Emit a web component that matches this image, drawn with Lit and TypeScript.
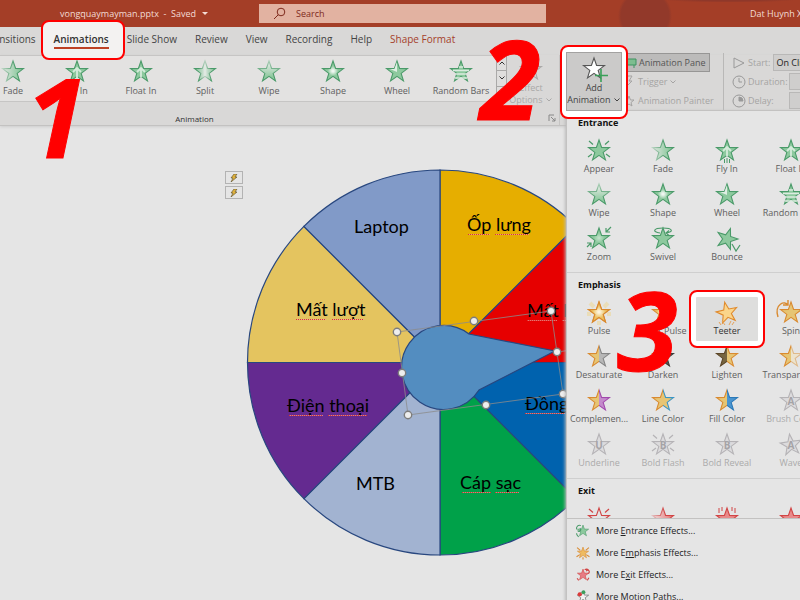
import { LitElement, html, svg, css, nothing, type TemplateResult } from "lit";
import { customElement } from "lit/decorators.js";
import { classMap } from "lit/directives/class-map.js";

type Svg = TemplateResult | TemplateResult[] | typeof nothing;

/* Points of a five-pointed star centred on the origin. */
const starPoints = (outer: number, inner: number) =>
  Array.from({ length: 10 }, (_, i) => {
    const r = i % 2 ? inner : outer;
    const a = (Math.PI / 5) * i - Math.PI / 2;
    return `${(r * Math.cos(a)).toFixed(2)},${(r * Math.sin(a)).toFixed(2)}`;
  }).join(" ");

const STAR = starPoints(11, 4.4);

const star = (fill: string, stroke: string, extra: Svg = nothing, defs: Svg = nothing, turn = 0) => html`
  <svg class="star" viewBox="-13 -12 26 24" aria-hidden="true">
    <defs>${defs}</defs>
    <polygon points=${STAR} fill=${fill} stroke=${stroke} stroke-width="1.1" transform="rotate(${turn})"></polygon>
    ${extra}
  </svg>`;

const linear = (id: string, dir: "x" | "y", stops: [number, string][]) => svg`
  <linearGradient id=${id} x1="0" y1="0" x2=${dir === "x" ? 1 : 0} y2=${dir === "y" ? 1 : 0}>
    ${stops.map(([o, c]) => svg`<stop offset=${o} stop-color=${c}></stop>`)}
  </linearGradient>`;
const radial = (id: string, stops: [number, string][]) => svg`
  <radialGradient id=${id}>
    ${stops.map(([o, c]) => svg`<stop offset=${o} stop-color=${c}></stop>`)}
  </radialGradient>`;
const line = (d: string, color: string, width = 1.2) =>
  svg`<path d=${d} fill="none" stroke=${color} stroke-width=${width}></path>`;
const letter = (t: string) => svg`<text class="glyph" x="0" y="4" text-anchor="middle">${t}</text>`;

const G = "#8dc99e";
const GS = "#4a9a69";
const O = "#e6c574";
const OS = "#d98a30";
const N = "#dcdbdd";
const NS = "#b5b3b6";
const R = "#e88a8a";
const RS = "#d14545";
const RAYS = "M-10 -10L-6 -6.5M10 -10L6 -6.5M-11 6L-7 3M11 6L7 3";

const icons: Record<string, () => TemplateResult> = {
  appear: () => star(G, GS, line(RAYS, GS)),
  fade: () => star("url(#fade)", "url(#fadeS)", nothing, [
    linear("fade", "x", [[0, "#dfe6e1"], [0.8, G]]),
    linear("fadeS", "x", [[0, "#b9d3c1"], [0.6, GS]]),
  ]),
  flyGallery: () => star(G, GS, line("M0 6V-4M-4 0L0 -4L4 0", "#d5ebdb", 1.8)),
  fly: () => star(G, GS, [line("M0 5V-4M-4 0L0 -4L4 0", "#d5ebdb", 1.8), line("M-2.5 8V12M0 7V12M2.5 8V12", GS, 1)]),
  float: () => star(G, GS, line("M0 5V-4M-4 0L0 -4L4 0", "#d5ebdb", 1.8)),
  split: () => star("url(#split)", "url(#splitS)", nothing, [
    linear("split", "x", [[0, G], [0.35, "#b9d8c2"], [0.5, "#e6ebe7"], [0.65, "#b9d8c2"], [1, G]]),
    linear("splitS", "x", [[0.2, GS], [0.5, "#b5d0be"], [0.8, GS]]),
  ]),
  wipe: () => star("url(#wipe)", "url(#wipeS)", nothing, [
    linear("wipe", "y", [[0.1, "#e6ebe7"], [0.8, G]]),
    linear("wipeS", "y", [[0, "#a9cdb5"], [0.7, GS]]),
  ]),
  shape: () => star("url(#shape)", GS, nothing, radial("shape", [[0.1, "#eef6f0"], [0.5, G]])),
  wheel: () => star(G, GS, svg`<path d="M0 0L-7 -3H-2.6L0 -10Z" fill="#dfeee3"></path>`),
  bars: () => star(G, GS, line("M-2 -5H2M-8 -1.5H8M-5 2H5M-6 6H6", "#dcebe0", 1.4)),
  zoom: () => star("url(#zoomF)", GS, line("M12 -12L7 -7M7 -11V-7H11M-12 8L-8 4M-12 4H-8V8", GS), radial("zoomF", [[0, "#c5e3cd"], [0.5, G]])),
  swivel: () => star(G, GS, line("M-3 -6C-11 -7 -10 -11 0 -11S11 -7 3 -6M6 -8.500L3 -6L6 -3.500", GS)),
  bounce: () => star(G, GS, line("M5 5L9 12L13 6", GS), nothing, 18),
  pulse: () => star("url(#pulse)", OS, nothing, radial("pulse", [[0.1, "#fbf3dc"], [0.6, "#ecc363"]])),
  pulseGlow: () => star("url(#pulseG)", OS,
    svg`<path d="M-9 -10L-5 -6M9 -10L5 -6M-12 1H-8M12 1H8M0 8V12" stroke="#ecdcae" stroke-width="4" opacity=".8"></path>
        <polygon points=${STAR} fill="url(#pulseG)" stroke=${OS} stroke-width="1.2"></polygon>`,
    radial("pulseG", [[0.1, "#fbf3dc"], [0.6, "#ecc363"]])),
  teeter: () => star("#fbd58a", "#e08a2c", line("M-5 8L-2 12M-8 9L-6 12M4 8L2 12M7 9L5 12", "#e5a25a", 1), nothing, -12),
  spin: () => star(O, OS, line("M-13 4C-17 -9 -6 -13 -3 -8M-3 -13V-8H-8", OS, 1.4)),
  desaturate: () => half("des", O, "#b7b7b7", OS, "#858585"),
  darken: () => half("dar", O, "#55534f", OS, "#3d3b38"),
  lighten: () => half("lig", "#776540", O, "#5c4628", OS),
  transparency: () => half("tra", O, "#ece3cd", OS, "#dfb98a"),
  complementary: () => half("com", O, "#c48acb", OS, "#a149ad"),
  lineColor: () => half("lin", O, O, OS, "#3b95c4"),
  fillColor: () => half("fil", O, "#4a95d0", OS, "#2b79b8"),
  brush: () => star(N, NS, letter("A")),
  underline: () => star(N, NS, letter("U")),
  boldFlash: () => star(N, NS, [letter("B"), line(RAYS, NS)]),
  boldReveal: () => star(N, NS, letter("B")),
  wave: () => star(N, NS, letter("A"), nothing, -8),
  exitDisappear: () => star("#e5e5e5", RS, line(RAYS, RS)),
  exitFade: () => star("url(#xf)", "url(#xfS)", nothing, [
    linear("xf", "x", [[0, "#eedede"], [0.8, R]]),
    linear("xfS", "x", [[0, "#e3bcbc"], [0.6, RS]]),
  ]),
  exitFly: () => star(R, RS, line("M-8 -11V-6M-5 -12V-8M5 -12V-8M8 -11V-6", RS, 1)),
  exitFloat: () => star(R, RS),
  moreEntrance: () => star(G, GS, line("M-12 -3C-13 -9 -8 -12 -4 -10M-12 4C-12 8 -9 10 -8 11M-10 -1A3 3 0 1 0 -6 -5", GS, 2)),
  moreEmphasis: () => star("#eebb62", OS, line("M-11 -10L-5 -5M11 -10L5 -5M-12 7L-6 3M12 7L6 3M0 8V12", OS, 2)),
  moreExit: () => star("#e77c84", RS, line("M3 -10C9 -13 13 -8 11 -4M6 -7A3 3 0 1 1 9 -3M-11 6L-8 10M11 5L8 10", RS, 2)),
  morePaths: () => star("#f3f3f3", "#555", svg`<path d="M-7 -5Q-4 -10 0 -10" fill="none" stroke="#555"></path>
    <circle cx="-6" cy="-5" r="4" fill="#dd3a3a"></circle><circle cx="1" cy="-9" r="3.500" fill="#3f9e5d"></circle>`),
};

/* Star whose left and right halves carry different colours. */
function half(id: string, a: string, b: string, sa: string, sb: string) {
  return star(`url(#${id})`, `url(#${id}S)`, nothing, [
    linear(id, "x", [[0.5, a], [0.5, b]]),
    linear(`${id}S`, "x", [[0.5, sa], [0.5, sb]]),
  ]);
}

interface Effect { icon: string; label: string; on?: boolean; off?: boolean }
const fx = (icon: string, label: string, state: Partial<Effect> = {}): Effect => ({ icon, label, ...state });
const OFF = { off: true };

const GALLERY = [
  fx("fade", "Fade"), fx("flyGallery", "Fly In"), fx("float", "Float In"), fx("split", "Split"),
  fx("wipe", "Wipe"), fx("shape", "Shape"), fx("wheel", "Wheel"), fx("bars", "Random Bars"),
];

const SECTIONS: { title: string; effects: Effect[] }[] = [
  { title: "Entrance", effects: [
    fx("appear", "Appear"), fx("fade", "Fade"), fx("fly", "Fly In"), fx("float", "Float In"),
    fx("wipe", "Wipe"), fx("shape", "Shape"), fx("wheel", "Wheel"), fx("bars", "Random Bars"),
    fx("zoom", "Zoom"), fx("swivel", "Swivel"), fx("bounce", "Bounce"),
  ] },
  { title: "Emphasis", effects: [
    fx("pulseGlow", "Pulse"), fx("pulse", "Color Pulse"), fx("teeter", "Teeter", { on: true }), fx("spin", "Spin"),
    fx("desaturate", "Desaturate"), fx("darken", "Darken"), fx("lighten", "Lighten"), fx("transparency", "Transparency"),
    fx("complementary", "Complemen..."), fx("lineColor", "Line Color"), fx("fillColor", "Fill Color"), fx("brush", "Brush Color", OFF),
    fx("underline", "Underline", OFF), fx("boldFlash", "Bold Flash", OFF), fx("boldReveal", "Bold Reveal", OFF), fx("wave", "Wave", OFF),
  ] },
  { title: "Exit", effects: [
    fx("exitDisappear", "Disappear"), fx("exitFade", "Fade"), fx("exitFly", "Fly Out"), fx("exitFloat", "Float Out"),
  ] },
];

const MORE: [string, TemplateResult][] = [
  ["moreEntrance", html`More <u>E</u>ntrance Effects...`],
  ["moreEmphasis", html`More E<u>m</u>phasis Effects...`],
  ["moreExit", html`More E<u>x</u>it Effects...`],
  ["morePaths", html`More Motion <u>P</u>aths...`],
];

const TABS = ["Transitions", "Animations", "Slide Show", "Review", "View", "Recording", "Help", "Shape Format"];

/* Wheel sectors, clockwise from twelve o'clock. */
const SECTORS = ["#e6ae00", "#e60000", "#0062ae", "#00a149", "#a2b3d1", "#642a90", "#e4c45f", "#819ac8"];
const WORDS: [string, number, number, [number, number][]][] = [
  ["Laptop", 354, 233, []],
  ["Ốp lưng", 467, 231, [[468, 490], [495, 529]]],
  ["Mất lượt", 296, 316, [[296, 326], [332, 364]]],
  ["Mất lượt", 527, 317, [[527, 557], [562, 594]]],
  ["Điện thoại", 287, 412, [[289, 323], [328, 367]]],
  ["Đồng hồ", 525, 410, [[525, 565]]],
  ["MTB", 356, 490, []],
  ["Cáp sạc", 460, 489, [[462, 491], [495, 519]]],
];
const HANDLES = [[397, 332], [474, 321], [551, 311], [402, 373], [557, 352], [408, 415], [486, 405], [563, 394]];

const wheel = () => {
  const cx = 440, cy = 362.5, r = 192.5;
  const at = (i: number) => {
    const a = (Math.PI / 4) * i - Math.PI / 2;
    return `${(cx + r * Math.cos(a)).toFixed(1)} ${(cy + r * Math.sin(a)).toFixed(1)}`;
  };
  return html`<svg class="wheel" viewBox="240 160 400 400" role="img" aria-label="Vòng quay may mắn">
    ${SECTORS.map((c, i) => svg`<path d="M${cx} ${cy}L${at(i)}A${r} ${r} 0 0 1 ${at(i + 1)}Z" fill=${c} stroke="#28477f" stroke-width="1.2"></path>`)}
    ${WORDS.map(([t, x, y, marks]) => svg`
      <text class="word" x=${x} y=${y}>${t}</text>
      ${marks.map(([a, b]) => svg`<path d="M${a} ${y + 3}.5H${b}" stroke="#eaa79c" stroke-opacity=".7"></path>
        <path d="M${a} ${y + 3}.5H${b}" stroke="#d33" stroke-dasharray="1 1"></path>`)}`)}
    <path d="M469 334A42 42 0 1 0 479 390L555 351Z" fill="#538dc0" stroke="#28477f" stroke-width="1.2"></path>
    <path d="M397 332L551 311L563 394L408 415ZM557 352L600 346" fill="none" stroke="#8b8b8b" stroke-width="0.8"></path>
    ${HANDLES.map(([x, y]) => svg`<circle cx=${x} cy=${y} r="3.700" fill="#eee" stroke="#7d7d7d" stroke-width="1.4"></circle>`)}
  </svg>`;
};

const chevron = (up = false) => html`<svg class="chev" viewBox="0 0 8 6" aria-hidden="true">
  <path d=${up ? "M1.500 4.500L4 2L6.500 4.500" : "M1.500 1.500L4 4L6.500 1.500"} fill="none" stroke="currentColor"></path></svg>`;

const tiny = (body: TemplateResult) => html`<svg class="tiny" viewBox="0 0 14 14" aria-hidden="true">${body}</svg>`;

@customElement("app-root")
export class AppRoot extends LitElement {
  static styles = css`
    :host {
      display: block;
      height: 100vh;
      overflow: hidden;
      background: #e5e5e5;
      color: #444;
      font: 9px/12px "Open Sans", "Noto Sans", sans-serif;
    }
    * { box-sizing: border-box; }
    button, input, select { font: inherit; color: inherit; margin: 0; padding: 0; border: 0; background: none; border-radius: 0; }
    button { white-space: nowrap; }
    .app { position: relative; display: flex; flex-direction: column; height: 100%; }

    .title {
      flex: none; display: flex; align-items: center; height: 27px; color: #f3dcd5;
      background:
        radial-gradient(circle at 645px 16px, #92392a 24px, transparent 27px),
        radial-gradient(ellipse at 730px 0, #8f382a 30px, transparent 66px),
        #a43e27;
    }
    .file { width: 259px; padding-left: 60px; display: flex; align-items: center; gap: 6px; }
    .caret { border: 3px solid transparent; border-top-color: #f3dcd5; border-bottom: 0; }
    .search { flex: 0 1 287px; display: flex; align-items: center; gap: 10px; height: 19px; padding-left: 14px; background: #e2b2a1; color: #7e2a1c; }
    .search input { width: 100px; outline: 0; }
    .search input::placeholder { color: #7e2a1c; opacity: 1; }
    .user { margin-left: auto; width: 50px; overflow: visible; white-space: nowrap; }
    .lens { width: 13px; height: 13px; }

    .tabs { flex: none; display: flex; align-items: flex-start; gap: 18px; height: 28px; background: #d9d8d7; padding-right: 20px; }
    .tabs button { position: relative; font-size: 10px; line-height: 24px; flex: none; }
    .tabs button:first-child { margin-left: -16px; }
    .tabs .format { color: #a5402a; }
    .tabs .current { z-index: 2; color: #333; font-weight: 600; }
    .current::before { content: ""; position: absolute; z-index: -1; inset: -7px -16px -9px -13px; background: #f3f2f1; border: 2px solid #f00; border-radius: 8px; }
    .current::after { content: ""; position: absolute; inset: 20px 0 auto; height: 2px; background: #bd4124; }

    .ribbon { flex: none; display: flex; height: 71px; background: #d9d8d7; border-bottom: 1px solid #c3c2c1; box-shadow: 0 1px 3px #ccc; color: #5a5a5a; }
    .group { flex: none; display: flex; flex-direction: column; }
    .animation { width: 560px; border-right: 1px solid #c6c5c4; }
    .row { display: flex; height: 47px; }
    .gallery { display: flex; width: 496px; overflow: hidden; background: #e3e2e1; border: solid #c6c5c4; border-width: 1px 0; }
    .gallery .fx:first-child { margin-left: -19px; }
    .gallery .fx { gap: 1px; }
    .scroll { display: grid; width: 11px; border: 1px solid #aaa9a8; background: #dfdedd; }
    .scroll button { display: grid; place-items: center; color: #333; }
    .scroll button + button { border-top: 1px solid #aaa9a8; }
    .options { display: flex; flex-direction: column; align-items: center; width: 48px; color: #aaa9a8; padding-top: 3px; }
    .caption { display: flex; align-items: center; justify-content: center; height: 24px; margin-left: -170px; padding-top: 10px; color: #333; font-size: 8px; position: relative; }
    .launcher { position: absolute; right: 3px; top: 12px; width: 8px; height: 8px; }

    .fx { flex: none; display: flex; flex-direction: column; align-items: center; width: 64px; height: 44px; padding-top: 4px; color: #606060; overflow: visible; }
    .fx.on { position: relative; background: #dededd; color: #333; }
    .fx.off { color: #ababab; }
    .star { flex: none; width: 26px; height: 24px; overflow: visible; }
    .glyph { font: bold 10px "Open Sans", sans-serif; fill: #a5a3a6; }
    .chev { width: 8px; height: 6px; }
    .tiny { flex: none; width: 14px; height: 14px; }

    .advanced { flex: none; display: flex; width: 163px; padding-left: 6px; }
    .adder { position: relative; z-index: 2; width: 56px; }
    .add {
      position: relative; z-index: 2; display: flex; flex-direction: column; align-items: center; width: 56px; height: 59px; margin-top: -3px; padding-top: 3px;
      background: #cbcac9; border: 1px solid #a3a2a1; color: #444;
    }
    .adder::before { content: ""; position: absolute; z-index: 1; inset: -10px -6px 6px; background: #fff; border: 2px solid #f00; border-radius: 8px; }
    .add .star { height: 26px; }
    .stack { flex: 1; display: flex; flex-direction: column; align-items: flex-start; margin-top: -2px; color: #a5a4a3; }
    .stack button, .stack label { display: flex; align-items: center; gap: 2px; height: 19px; }
    .stack .pane { padding-right: 3px; background: #bcbbba; border: 1px solid #979695; color: #555; }
    .timing { flex: 1; border-left: 1px solid #b9b8b7; height: 57px; padding-left: 8px; overflow: hidden; }
    .timing select, .timing input { width: 70px; height: 17px; background: #cfcecd; border: 1px solid #b9b8b7; color: #222; margin-left: 1px; padding-left: 2px; }
    .timing select { appearance: none; }
    .timing label { white-space: nowrap; }
    .timing .wide { width: 38px; }

    .menu { position: absolute; z-index: 0; top: 55px; left: 0; width: 272px; color: #222; background: #e5e5e5; border: 1px solid #c3c2c1; box-shadow: -1px 1px 3px #bbb; }
    .sections { height: 408px; overflow: hidden; border-bottom: 1px solid #c3c2c1; }
    .section { padding-bottom: 5px; border-bottom: 1px solid #cfcfcf; }
    .section h2 { margin: 0; padding-left: 11px; font: bold 9px/24px "Open Sans", sans-serif; color: #111; }
    .cells { display: grid; grid-template-columns: repeat(4, 64px); }
    .more { display: flex; flex-direction: column; padding: 1px 0 8px 9px; }
    .more button { display: flex; align-items: center; gap: 6px; height: 22px; }
    .more .star { width: 14px; height: 14px; }
    .ring { position: absolute; inset: -7px -6px; border: 2px solid #f00; border-radius: 8px; box-shadow: inset 0 0 0 5px #fff; }

    .slide { flex: 1; position: relative; min-height: 0; }
    .wheel { position: absolute; left: 240px; top: 34px; width: 400px; height: 400px; }
    .word { font: 18px Lato, "Open Sans", sans-serif; fill: #000; }
    .tags { display: flex; flex-direction: column; gap: 2px; width: 18px; padding-top: 45px; margin-left: 225px; }
    .tags button { display: grid; place-items: center; height: 13px; border: 1px solid #b3b3b3; }
    .tags svg { width: 8px; height: 8px; }

    .step { position: absolute; z-index: 5; font: italic 700 110px/110px "Open Sans", sans-serif; -webkit-text-stroke: 1px #f00; color: #f00; pointer-events: none; }
    .one { left: 26px; top: 60px; }
    .two { left: 480px; top: 22px; }
    .three { left: 617px; top: 273px; }
  `;

  private effect(e: Effect) {
    return html`<button class=${classMap({ fx: true, on: !!e.on, off: !!e.off })} ?disabled=${!!e.off}>
      ${icons[e.icon]()}<span>${e.label}</span>${e.on ? html`<span class="ring"></span>` : nothing}
    </button>`;
  }

  private menu() {
    return html`<div class="menu">
      <div class="sections">
        ${SECTIONS.map((s) => html`<section class="section">
          <h2>${s.title}</h2>
          <div class="cells">${s.effects.map((e) => this.effect(e))}</div>
        </section>`)}
      </div>
      <div class="more">${MORE.map(([i, t]) => html`<button>${icons[i]()}<span>${t}</span></button>`)}</div>
    </div>`;
  }

  private ribbon() {
    return html`<div class="ribbon">
      <div class="group animation">
        <div class="row">
          <div class="gallery">${GALLERY.map((e) => this.effect(e))}</div>
          <div class="scroll">
            <button aria-label="Previous row">${chevron(true)}</button>
            <button aria-label="Next row">${chevron()}</button>
            <button aria-label="More">${chevron()}</button>
          </div>
          <button class="options" disabled>
            ${star("#d9d8d7", "#aaa9a8")}<span>Effect</span><span>Options ${chevron()}</span>
          </button>
        </div>
        <div class="caption">Animation
          <svg class="launcher" viewBox="0 0 8 8" aria-hidden="true"><path d="M1 7V1H6M3 3L7 7M7 4V7H4" fill="none" stroke="#888"></path></svg>
        </div>
      </div>
      <div class="advanced">
        <div class="adder">
          <button class="add" aria-haspopup="true" aria-expanded="true">
            ${star("#fff", "#555", line("M7 0V13M1 6.500H14", "#39a058", 1.6))}
            <span>Add</span><span>Animation ${chevron()}</span>
          </button>
          ${this.menu()}
        </div>
        <div class="stack">
          <button class="pane">${tiny(svg`<path d="M1 3H13V9H1ZM3 9V12M11 9V12" fill="#7dbd8f" stroke="#3f9360"></path>`)}Animation Pane</button>
          <button disabled>${tiny(svg`<path d="M6 1H10L7 6H10L3 13L5 8H2Z" fill="none" stroke="#a5a4a3"></path>`)}Trigger ${chevron()}</button>
          <button disabled>${tiny(svg`<path d="M7 2L8.500 6H12L9 8.500L10 12L7 10L4 12L5 8.500L1 6H5.500ZM1 3H5" fill="none" stroke="#a5a4a3"></path>`)}Animation Painter</button>
        </div>
      </div>
      <div class="stack timing">
        <label>${tiny(svg`<path d="M2 2L12 7L2 12Z" fill="none" stroke="#999"></path>`)}Start:
          <select><option>On Click</option></select></label>
        <label>${tiny(svg`<circle cx="7" cy="7" r="6" fill="none" stroke="#999"></circle><path d="M7 3V7H10" fill="none" stroke="#999"></path>`)}<span class="wide">Duration:</span>
          <input disabled></label>
        <label>${tiny(svg`<circle cx="7" cy="7" r="6" fill="none" stroke="#999"></circle><path d="M7 3V7H11A4 4 0 0 0 7 3Z" fill="#999" stroke="#999"></path>`)}<span class="wide">Delay:</span>
          <input disabled></label>
      </div>
    </div>`;
  }

  render() {
    const bolt = html`<button aria-label="Animation tag"><svg viewBox="0 0 8 8"><path d="M4 0H7L5 3H7L1 8L3 4H1Z" fill="#e2b33c" stroke="#554a2a" stroke-width=".6"></path></svg></button>`;
    return html`<div class="app">
      <header class="title">
        <div class="file"><span>vongquaymayman.pptx &nbsp;-&nbsp; Saved</span><span class="caret"></span></div>
        <label class="search">
          <svg class="lens" viewBox="0 0 13 13" aria-hidden="true"><circle cx="8" cy="5" r="3.800" fill="none" stroke="#7e2a1c"></circle><path d="M5.200 7.800L1 12" stroke="#7e2a1c"></path></svg>
          <input type="text" placeholder="Search" aria-label="Search">
        </label>
        <span class="user">Dat Huynh Xuan</span>
      </header>
      <nav class="tabs">
        ${TABS.map((t) => html`<button class=${classMap({ current: t === "Animations", format: t === "Shape Format" })}>${t}</button>`)}
      </nav>
      ${this.ribbon()}
      <main class="slide"><div class="tags">${bolt}${bolt}</div>${wheel()}</main>
      <span class="step one">1</span><span class="step two">2</span><span class="step three">3</span>
    </div>`;
  }
}
